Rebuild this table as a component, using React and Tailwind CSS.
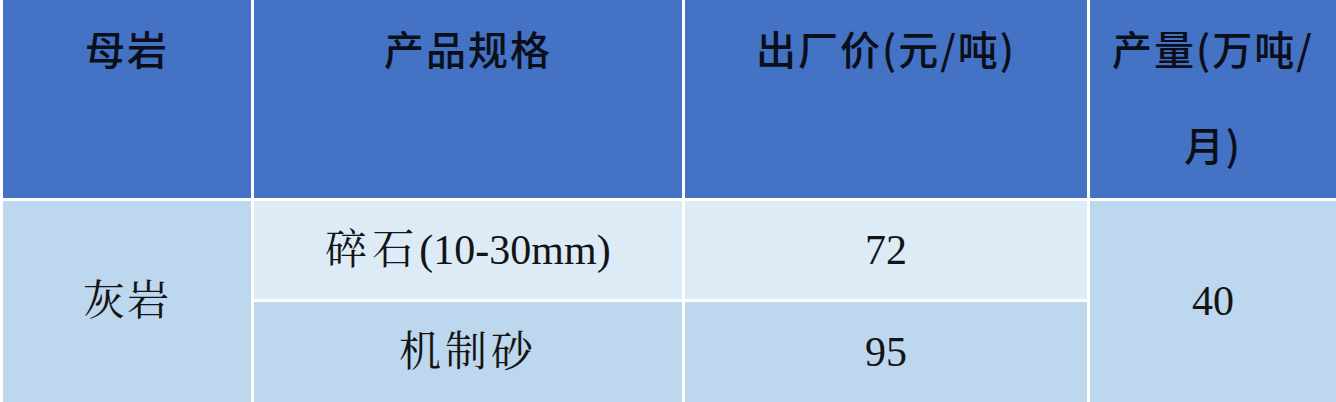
export default function App() {
  const head =
    "flex justify-center bg-[#4472c4] text-center text-[40px] font-medium leading-[96px] tracking-[2px] text-[#0b0f1a] [font-family:'Noto_Sans_CJK_SC','Liberation_Sans',sans-serif]";
  const cell =
    "flex items-center justify-center text-center text-[42px] text-[#141414] [font-family:'Liberation_Serif','Noto_Serif_CJK_SC','Noto_Sans_CJK_SC',serif]";

  return (
    <div className="w-[1336px] h-[402px] bg-white">
      <div className="grid grid-cols-[248px_428px_402px_246px] grid-rows-[198px_98px_100px] gap-[3px] pl-[3px]">
        <div className={head}>母岩</div>
        <div className={head}>产品规格</div>
        <div className={head}>出厂价(元/吨)</div>
        <div className={head}>
          <span>
            产量(万吨/
            <br />
            月)
          </span>
        </div>

        <div className={`${cell} row-span-2 bg-[#bdd7ee] tracking-[2px]`}>灰岩</div>
        <div className={`${cell} bg-[#ddebf7]`}>
          <span className="tracking-[5px]">碎石</span>(10-30mm)
        </div>
        <div className={`${cell} bg-[#ddebf7]`}>72</div>
        <div className={`${cell} row-span-2 bg-[#bdd7ee]`}>40</div>
        <div className={`${cell} bg-[#bdd7ee] tracking-[4px]`}>机制砂</div>
        <div className={`${cell} bg-[#bdd7ee]`}>95</div>
      </div>
    </div>
  );
}
